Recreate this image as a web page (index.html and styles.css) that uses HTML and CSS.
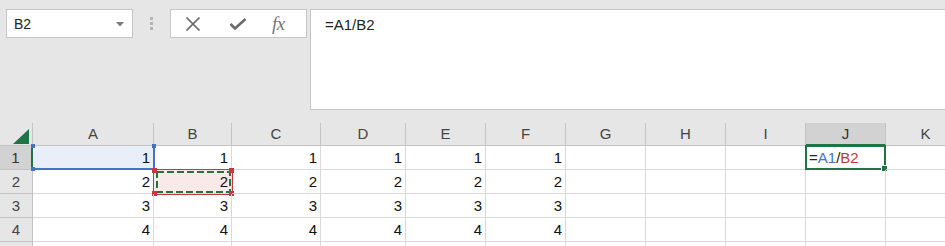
FILE: index.html
```html
<!DOCTYPE HTML>
<html>
<head>
  <title>Book1 - Excel</title>
  <meta name="viewport" content="width=device-width, initial-scale=1">
  <link rel="stylesheet" href="styles.css">
</head>
<body>

<div class="toolbar">
  <div class="namebox">
    <span>B2</span>
    <svg class="drop" width="8" height="5" viewBox="0 0 8 5"><path d="M0 0H8L4 4.5Z" fill="#7a7a7a"/></svg>
  </div>
  <div class="grip"><i></i><i></i><i></i></div>
  <div class="fbuttons">
    <svg width="16" height="14" viewBox="0 0 16 14"><path d="M1.5 0.5L14.5 13.5M14.5 0.5L1.5 13.5" stroke="#6a6a6a" stroke-width="1.7" fill="none"/></svg>
    <svg width="18" height="12" viewBox="0 0 18 12"><path d="M1.5 6L6 10.5L16.5 1" stroke="#6a6a6a" stroke-width="2.6" fill="none"/></svg>
    <span class="fx">fx</span>
  </div>
  <div class="formula">=A1/B2</div>
</div>

<div class="sheet">
  <div class="hd corner"><svg width="16" height="15" viewBox="0 0 16 15"><path d="M16 0V15H0Z" fill="#217346"/></svg></div>
  <div class="hd col">A</div>
  <div class="hd col">B</div>
  <div class="hd col">C</div>
  <div class="hd col">D</div>
  <div class="hd col">E</div>
  <div class="hd col">F</div>
  <div class="hd col">G</div>
  <div class="hd col">H</div>
  <div class="hd col">I</div>
  <div class="hd col sel">J</div>
  <div class="hd col">K</div>

  <div class="hd row sel">1</div>
  <div class="cell ref-a">1<span class="hl-a"><i class="k tl"></i><i class="k tr"></i><i class="k bl"></i></span></div>
  <div class="cell">1</div>
  <div class="cell">1</div>
  <div class="cell">1</div>
  <div class="cell">1</div>
  <div class="cell">1</div>
  <div class="cell"></div>
  <div class="cell"></div>
  <div class="cell"></div>
  <div class="cell active"><span class="eq">=</span><span class="r1">A1</span>/<span class="r2">B2</span><span class="box"><i class="handle"></i></span></div>
  <div class="cell"></div>

  <div class="hd row">2</div>
  <div class="cell">2</div>
  <div class="cell ref-b">2<span class="hl-b">
    <svg class="ants" width="78" height="24"><rect x="3" y="2" width="73" height="20" fill="none" stroke="#217346" stroke-width="2" stroke-dasharray="7 3"/></svg>
    <i class="k tl"></i><i class="k tr"></i><i class="k bl"></i><i class="k br"></i></span></div>
  <div class="cell">2</div>
  <div class="cell">2</div>
  <div class="cell">2</div>
  <div class="cell">2</div>
  <div class="cell"></div>
  <div class="cell"></div>
  <div class="cell"></div>
  <div class="cell"></div>
  <div class="cell"></div>

  <div class="hd row">3</div>
  <div class="cell">3</div>
  <div class="cell">3</div>
  <div class="cell">3</div>
  <div class="cell">3</div>
  <div class="cell">3</div>
  <div class="cell">3</div>
  <div class="cell"></div>
  <div class="cell"></div>
  <div class="cell"></div>
  <div class="cell"></div>
  <div class="cell"></div>

  <div class="hd row">4</div>
  <div class="cell">4</div>
  <div class="cell">4</div>
  <div class="cell">4</div>
  <div class="cell">4</div>
  <div class="cell">4</div>
  <div class="cell">4</div>
  <div class="cell"></div>
  <div class="cell"></div>
  <div class="cell"></div>
  <div class="cell"></div>
  <div class="cell"></div>

  <div class="hd row"></div>
  <div class="cell"></div>
  <div class="cell"></div>
  <div class="cell"></div>
  <div class="cell"></div>
  <div class="cell"></div>
  <div class="cell"></div>
  <div class="cell"></div>
  <div class="cell"></div>
  <div class="cell"></div>
  <div class="cell"></div>
  <div class="cell"></div>
</div>

</body>
</html>
```

FILE: styles.css
```css
body {
  margin: 0;
  background-color: #e6e6e6;
  font-family: "Liberation Sans", Arial, sans-serif;
  overflow: hidden;
}

.toolbar {
  display: flex;
  align-items: flex-start;
  height: 123px;
  padding: 9px 0 0 6px;
  box-sizing: border-box;
}

.namebox {
  width: 127px;
  height: 29px;
  box-sizing: border-box;
  background-color: #fff;
  border: 1px solid #c6c6c6;
  display: flex;
  align-items: center;
  justify-content: space-between;
  padding: 1px 8px 0 7px;
  font-size: 14px;
  color: #222;
}

.grip {
  display: flex;
  flex-direction: column;
  gap: 2px;
  margin: 8px 0 0 17px;
  width: 20px;
}

.grip i {
  width: 3px;
  height: 3px;
  background-color: #b4b4b4;
}

.fbuttons {
  width: 137px;
  height: 29px;
  box-sizing: border-box;
  background-color: #fff;
  border: 1px solid #c6c6c6;
  display: flex;
  align-items: center;
  padding: 0 0 0 14px;
  gap: 28px;
}

.fx {
  font-family: "Liberation Serif", "Times New Roman", serif;
  font-style: italic;
  font-size: 19px;
  color: #777;
  margin-left: -3px;
  letter-spacing: -0.5px;
}

.formula {
  flex: 1;
  margin-left: 3px;
  margin-right: -2px;
  height: 101px;
  box-sizing: border-box;
  background-color: #fff;
  border: 1px solid #c6c6c6;
  padding: 5px 0 0 14px;
  font-size: 15px;
  line-height: 20px;
  color: #222;
}

.sheet {
  display: grid;
  grid-template-columns: 33px 121px 78px 89px 85px 80px 80px 80px 80px 80px 80px 80px;
  grid-template-rows: 23px repeat(5, 24px);
  width: 966px;
  background-color: #fff;
  font-size: 15px;
  color: #111;
}

.hd {
  background-color: #e6e6e6;
  color: #444;
  border-right: 1px solid #c4c4c4;
  border-bottom: 1px solid #c4c4c4;
  box-sizing: border-box;
  display: flex;
  align-items: center;
  justify-content: center;
}

.hd.col {
  line-height: 22px;
}

.hd.sel {
  background-color: #d2d2d2;
  color: #333;
}

.hd.col.sel {
  border-bottom: 2px solid #217346;
}

.hd.row.sel {
  border-right: 2px solid #217346;
}

.corner {
  justify-content: flex-end;
  align-items: flex-end;
  padding: 0 3px 1px 0;
}

.corner svg {
  display: block;
}

.cell {
  position: relative;
  border-right: 1px solid #d9d9d9;
  border-bottom: 1px solid #d9d9d9;
  box-sizing: border-box;
  text-align: right;
  padding-right: 3px;
  line-height: 23px;
}

.ref-a {
  background-color: #e8eff9;
}

.ref-b {
  background-color: #f9e9e9;
}

.hl-a {
  position: absolute;
  left: -1px;
  top: -1px;
  right: -2px;
  bottom: -1px;
  border-right: 2px solid #4472c4;
  border-bottom: 2px solid #4472c4;
}

.hl-b {
  position: absolute;
  left: -1px;
  top: -1px;
  width: 80px;
  height: 26px;
  box-sizing: border-box;
  border: 1px solid #c8373e;
}

.ants {
  position: absolute;
  left: 0;
  top: 0;
}

.k {
  position: absolute;
  width: 4px;
  height: 4px;
}

.hl-a .k {
  background-color: #4472c4;
}

.hl-b .k {
  width: 5px;
  height: 5px;
  background-color: #c8373e;
}

.k.tl { left: -1px; top: -1px; }
.k.tr { right: -3px; top: -1px; }
.k.bl { left: -1px; bottom: -3px; }
.k.br { right: -3px; bottom: -3px; }

.hl-b .k.tl { left: -2px; top: -2px; }
.hl-b .k.tr { right: -2px; top: -2px; }
.hl-b .k.bl { left: -2px; bottom: -2px; }
.hl-b .k.br { right: -2px; bottom: -2px; }

.active {
  text-align: left;
  padding-left: 3px;
  color: #222;
}

.r1 {
  color: #4472c4;
}

.r2 {
  color: #c8373e;
}

.box {
  position: absolute;
  left: -1px;
  top: -1px;
  right: -1px;
  bottom: -1px;
  border: 2px solid #217346;
}

.handle {
  position: absolute;
  right: -4px;
  bottom: -4px;
  width: 5px;
  height: 5px;
  background-color: #217346;
  border: 1px solid #fff;
}
```
